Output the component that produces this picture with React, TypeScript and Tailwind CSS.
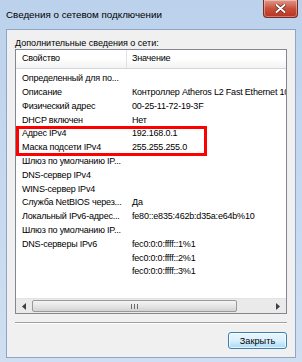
import React from "react";

const rows: [string, string][] = [
  ["Определенный для по...", ""],
  ["Описание", "Контроллер Atheros L2 Fast Ethernet 10/100 PCI-E"],
  ["Физический адрес", "00-25-11-72-19-3F"],
  ["DHCP включен", "Нет"],
  ["Адрес IPv4", "192.168.0.1"],
  ["Маска подсети IPv4", "255.255.255.0"],
  ["Шлюз по умолчанию IP...", ""],
  ["DNS-сервер IPv4", ""],
  ["WINS-сервер IPv4", ""],
  ["Служба NetBIOS через...", "Да"],
  ["Локальный IPv6-адрес...", "fe80::e835:462b:d35a:e64b%10"],
  ["Шлюз по умолчанию IP...", ""],
  ["DNS-серверы IPv6", "fec0:0:0:ffff::1%1"],
  ["", "fec0:0:0:ffff::2%1"],
  ["", "fec0:0:0:ffff::3%1"],
];

function CloseX() {
  return (
    <svg width="11" height="9" viewBox="0 0 11 9">
      <path d="M1.5 1 L9.5 8 M9.5 1 L1.5 8" stroke="#5a1a12" strokeWidth="3.2" strokeLinecap="round" />
      <path d="M1.5 1 L9.5 8 M9.5 1 L1.5 8" stroke="#ffffff" strokeWidth="2" strokeLinecap="round" />
    </svg>
  );
}

export default function App() {
  return (
    <div
      className="w-[302px] h-[362px] flex flex-col bg-gradient-to-b from-[#bcd2ec] to-[#cfdff1] text-black overflow-hidden"
      style={{ fontFamily: "'Liberation Sans', Arial, sans-serif" }}
    >
      {/* Title bar */}
      <div className="h-[29px] flex items-start justify-between shrink-0">
        <div className="pl-[6px] pt-[9px] text-[9.8px] leading-[12px] text-black">
          Сведения о сетевом подключении
        </div>
        <button className="mr-[4px] w-[35px] h-[18px] flex items-center justify-center rounded-b-[4px] border border-t-0 border-[#7a2a20] bg-gradient-to-b from-[#e0988a] via-[#c8503c] to-[#b83222] shadow-[inset_0_0_0_1px_rgba(255,255,255,0.35)]">
          <CloseX />
        </button>
      </div>

      {/* Client area */}
      <div className="flex-1 mx-[6px] mb-[4px] bg-[#f0f0f0] border border-[#8ea6c4] flex flex-col px-[8px]">
        <div className="pt-[8px] h-[19px] text-[9px] leading-[11px] text-black">
          Дополнительные сведения о сети:
        </div>

        {/* List view */}
        <div className="relative h-[265px] bg-white border border-[#828790] flex flex-col overflow-hidden">
          <div className="h-[19px] flex shrink-0 border-b border-[#d5d5d5] bg-gradient-to-b from-[#ffffff] via-[#ffffff] to-[#f1f2f4] text-[9px] tracking-[-0.2px]">
            <div className="w-[111px] pl-[6px] flex items-center border-r border-[#dfe2e7]">Свойство</div>
            <div className="flex-1 pl-[5px] flex items-center">Значение</div>
          </div>
          <div className="flex-1 pt-[3px] text-[9px] tracking-[-0.2px]">
            {rows.map(([k, v], i) => (
              <div key={i} className="h-[13.8px] flex items-center whitespace-nowrap">
                <div className="w-[111px] pl-[6px] overflow-hidden">{k}</div>
                <div className="flex-1 pl-[5px] overflow-hidden">{v}</div>
              </div>
            ))}
          </div>
          {/* Horizontal scrollbar */}
          <div className="h-[15px] flex items-stretch bg-[#eaeaea] border-t border-[#e3e3e3] shrink-0">
            <div className="w-[16px] flex items-center justify-center">
              <svg width="4" height="7" viewBox="0 0 4 7"><path d="M4 0 L0 3.5 L4 7Z" fill="#404040" /></svg>
            </div>
            <div className="w-[205px] my-[1px] rounded-[2px] border border-[#9a9a9a] bg-gradient-to-b from-[#f4f4f4] via-[#e6e6e6] to-[#d2d2d2] flex items-center justify-center">
              <svg width="7" height="5" viewBox="0 0 7 5">
                <path d="M0.5 0 V5 M3.5 0 V5 M6.5 0 V5" stroke="#6a6a6a" strokeWidth="1" />
              </svg>
            </div>
            <div className="flex-1" />
            <div className="w-[16px] flex items-center justify-center">
              <svg width="4" height="7" viewBox="0 0 4 7"><path d="M0 0 L4 3.5 L0 7Z" fill="#404040" /></svg>
            </div>
          </div>
          {/* Red highlight around IPv4 rows */}
          <div className="absolute left-0 top-[76px] w-[191px] h-[30px] border-[3px] border-[#ff0000] pointer-events-none" />
        </div>

        <div className="mt-[8px] h-[2px] border-t border-[#a0a0a0] border-b border-b-white" />

        <div className="flex justify-end pt-[8px]">
          <button className="w-[59px] h-[17px] rounded-[3px] border border-[#3c7fb1] bg-gradient-to-b from-[#eaf6fd] via-[#d9f0fc] to-[#a7d9f5] shadow-[inset_0_0_0_1px_rgba(255,255,255,0.7)] text-[9.2px] leading-[14px] text-black">
            Закрыть
          </button>
        </div>
      </div>
    </div>
  );
}
